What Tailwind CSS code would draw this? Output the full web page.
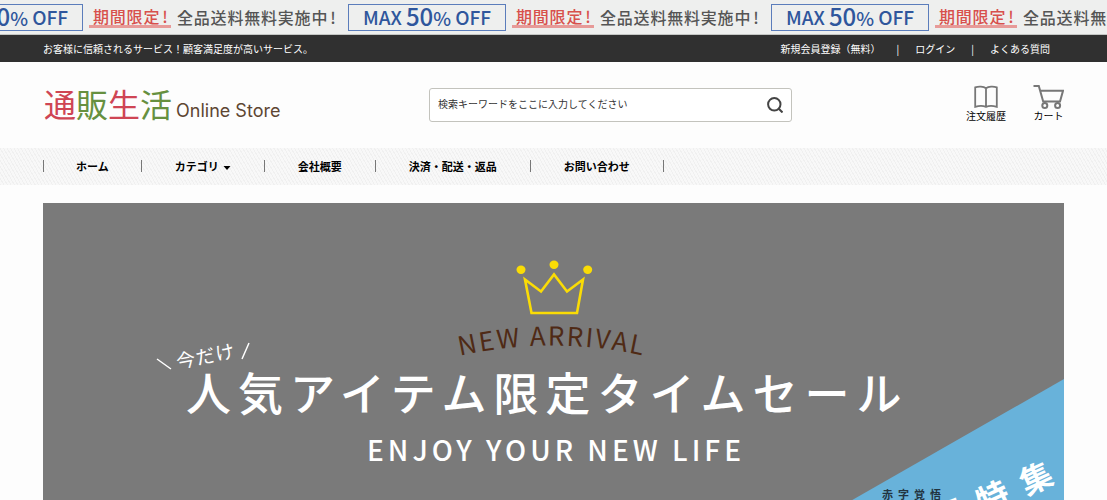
<!DOCTYPE html>
<html lang="ja">
<head>
    <meta charset="UTF-8">
    <meta name="viewport" content="width=device-width, initial-scale=1.0">
    <title>通販生活 Online Store</title>
    <script src="https://cdn.jsdelivr.net/npm/@tailwindcss/browser@4"></script>
</head>
<body class="h-screen overflow-hidden bg-[#fdfdfd] font-['Noto_Sans_CJK_JP',sans-serif] text-black">

    <!-- Campaign ticker -->
    <div class="flex h-[35px] items-center overflow-hidden border-b border-[#c4c6c4] bg-[#eeefee]">
        <div class="-ml-[75px] flex shrink-0" id="tickerTrack"></div>
    </div>

    <!-- Top bar -->
    <div class="flex h-[27px] items-center justify-between bg-[#303030] px-[43px] pb-px text-[10px] text-white">
        <p>お客様に信頼されるサービス！顧客満足度が高いサービス。</p>
        <nav class="flex items-center gap-4 pr-[14px]">
            <a href="#">新規会員登録（無料）</a>
            <span>|</span>
            <a href="#">ログイン</a>
            <span>|</span>
            <a href="#">よくある質問</a>
        </nav>
    </div>

    <!-- Header -->
    <header class="grid h-[86px] grid-cols-[386px_363px_1fr] items-center px-[43px]">
        <a href="#" class="flex items-baseline gap-1 pl-px whitespace-nowrap">
            <span class="text-[32px] leading-8 text-[#cf4554]">通<span class="text-[#66903f]">販</span>生<span class="text-[#66903f]">活</span></span>
            <span class="font-[Inter,sans-serif] text-[18px] text-[#5e4632]">Online Store</span>
        </a>
        <form class="flex h-[34px] items-center rounded-[3px] border border-[#c3c3bd] bg-white px-2">
            <label for="keyword" class="sr-only">検索</label>
            <input id="keyword" type="text" placeholder="検索キーワードをここに入力してください" class="min-w-0 flex-1 pb-[3px] text-[10px] outline-none placeholder:text-[#333]">
            <button type="button" aria-label="検索">
                <svg class="size-4" viewBox="0 0 16 16" fill="none" stroke="#444" stroke-width="2">
                    <circle cx="7.3" cy="7.3" r="6.2"/>
                    <path d="M11.8 11.8 15.5 15.5"/>
                </svg>
            </button>
        </form>
        <div class="flex items-end justify-end gap-[27px] pb-[3px] text-[10px] leading-[14px]">
            <a href="#" class="flex flex-col items-center">
                <svg class="size-6" viewBox="0 0 24 24" fill="none" stroke="#777" stroke-width="1.8">
                    <path d="M12 3.2C9.5 1.4 4.5 1.2 1.2 2.4V21.8C4.5 20.8 9.5 20.8 12 21.8C14.5 20.8 19.5 20.8 22.8 21.8V2.4C19.5 1.2 14.5 1.4 12 3.2ZM12 3.2V21.8"/>
                </svg>
                <span>注文履歴</span>
            </a>
            <a href="#" class="flex flex-col items-center">
                <svg class="h-6 w-[31px]" viewBox="0 0 31 24" fill="none" stroke="#777" stroke-width="2">
                    <path d="M.5 1H5.8L10.2 16.5H27L30 5.8H7.2"/>
                    <circle cx="11.8" cy="20.5" r="2.5"/>
                    <circle cx="24.6" cy="20.5" r="2.5"/>
                </svg>
                <span>カート</span>
            </a>
        </div>
    </header>

    <!-- Global navigation -->
    <nav class="h-[37px] bg-[repeating-linear-gradient(60deg,#f0f0f0_0_1px,#f8f8f8_1px_3px)] px-[43px] pb-px">
        <ul class="flex h-full items-center text-[11px] leading-3 font-bold">
            <li class="border-x border-[#777] px-8"><a href="#">ホーム</a></li>
            <li class="border-r border-[#777] px-[33px]">
                <a href="#" class="flex items-center gap-1">カテゴリ
                    <svg class="mt-1 h-1 w-2" viewBox="0 0 8 4"><path d="M.5 0H7.5L4 4Z"/></svg>
                </a>
            </li>
            <li class="border-r border-[#777] px-[33px]"><a href="#">会社概要</a></li>
            <li class="border-r border-[#777] px-[33px]"><a href="#">決済・配送・返品</a></li>
            <li class="border-r border-[#777] px-[33px]"><a href="#">お問い合わせ</a></li>
        </ul>
    </nav>

    <!-- Main visual -->
    <main class="px-[43px] pt-[18px]">
        <svg class="block w-full" viewBox="0 0 1021 440" role="img" aria-label="人気アイテム限定タイムセール">
            <rect width="1021" height="440" fill="#7a7a7a"/>
            <path d="M1021 176V440H559Z" fill="#68b2da"/>

            <!-- crown -->
            <g fill="#fadc05">
                <ellipse cx="478" cy="66.7" rx="4.5" ry="4.2"/>
                <ellipse cx="511" cy="61.7" rx="4.5" ry="4.2"/>
                <ellipse cx="544.7" cy="66.7" rx="4.5" ry="4.2"/>
            </g>
            <path d="M482 76.5 498 88.5 511 71.5 524 88.5 540 76.5 534 110H488.5Z" fill="none" stroke="#fadc05" stroke-width="2.6"/>

            <path id="arc" d="M396 158Q509 127 622 158" fill="none"/>
            <text class="text-[26px] tracking-[2px]" fill="#4f2a15" text-anchor="middle"><textPath href="#arc" startOffset="50%">NEW ARRIVAL</textPath></text>

            <!-- 今だけ -->
            <path d="M114 156 128 166M199 156 206 140" stroke="#fff" stroke-width="1.5"/>
            <text class="text-[19px] tracking-wider" fill="#fff" text-anchor="middle" transform="translate(164 160) rotate(-11)">今だけ</text>

            <text class="text-[45px] font-medium tracking-[7px]" x="143" y="208" fill="#fff">人気アイテム限定タイムセール</text>
            <text class="text-[28px] font-medium tracking-[4px]" x="513" y="258" fill="#fff" text-anchor="middle">ENJOY YOUR NEW LIFE</text>

            <!-- corner ribbon -->
            <text class="text-[11px] font-bold tracking-[5px]" x="839" y="296" fill="#223440">赤字覚悟</text>
            <g class="text-[32px] font-bold" fill="#fff" text-anchor="middle">
                <text transform="translate(916 320) rotate(-25)">う</text>
                <text transform="translate(955 305) rotate(-25)">特</text>
                <text transform="translate(998 286) rotate(-25)">集</text>
            </g>
        </svg>
    </main>

    <script>
        const track = document.getElementById('tickerTrack');
        const message = `
            <p class="flex w-[423px] shrink-0 items-center whitespace-nowrap text-[16px] leading-5 tracking-wider text-[#555]">
                <span class="flex h-[27px] w-[158px] items-center justify-center gap-1 border border-[#5b7dbb] text-[19px] font-medium tracking-normal text-[#2f569c]"><span>MAX</span><span><span class="text-[24px]">50</span>%</span><span>OFF</span></span>
                <span class="ml-[6px] h-[22px] w-[82px] border-b-3 border-[#e79a98] pl-1 font-medium text-[#d8504c]">期間限定<span class="pl-[2px]">!</span></span>
                <span class="ml-[6px] font-medium">全品送料無料実施中<span class="pl-[2px]">!</span></span>
            </p>`;
        track.innerHTML = message.repeat(4);
    </script>
</body>
</html>
